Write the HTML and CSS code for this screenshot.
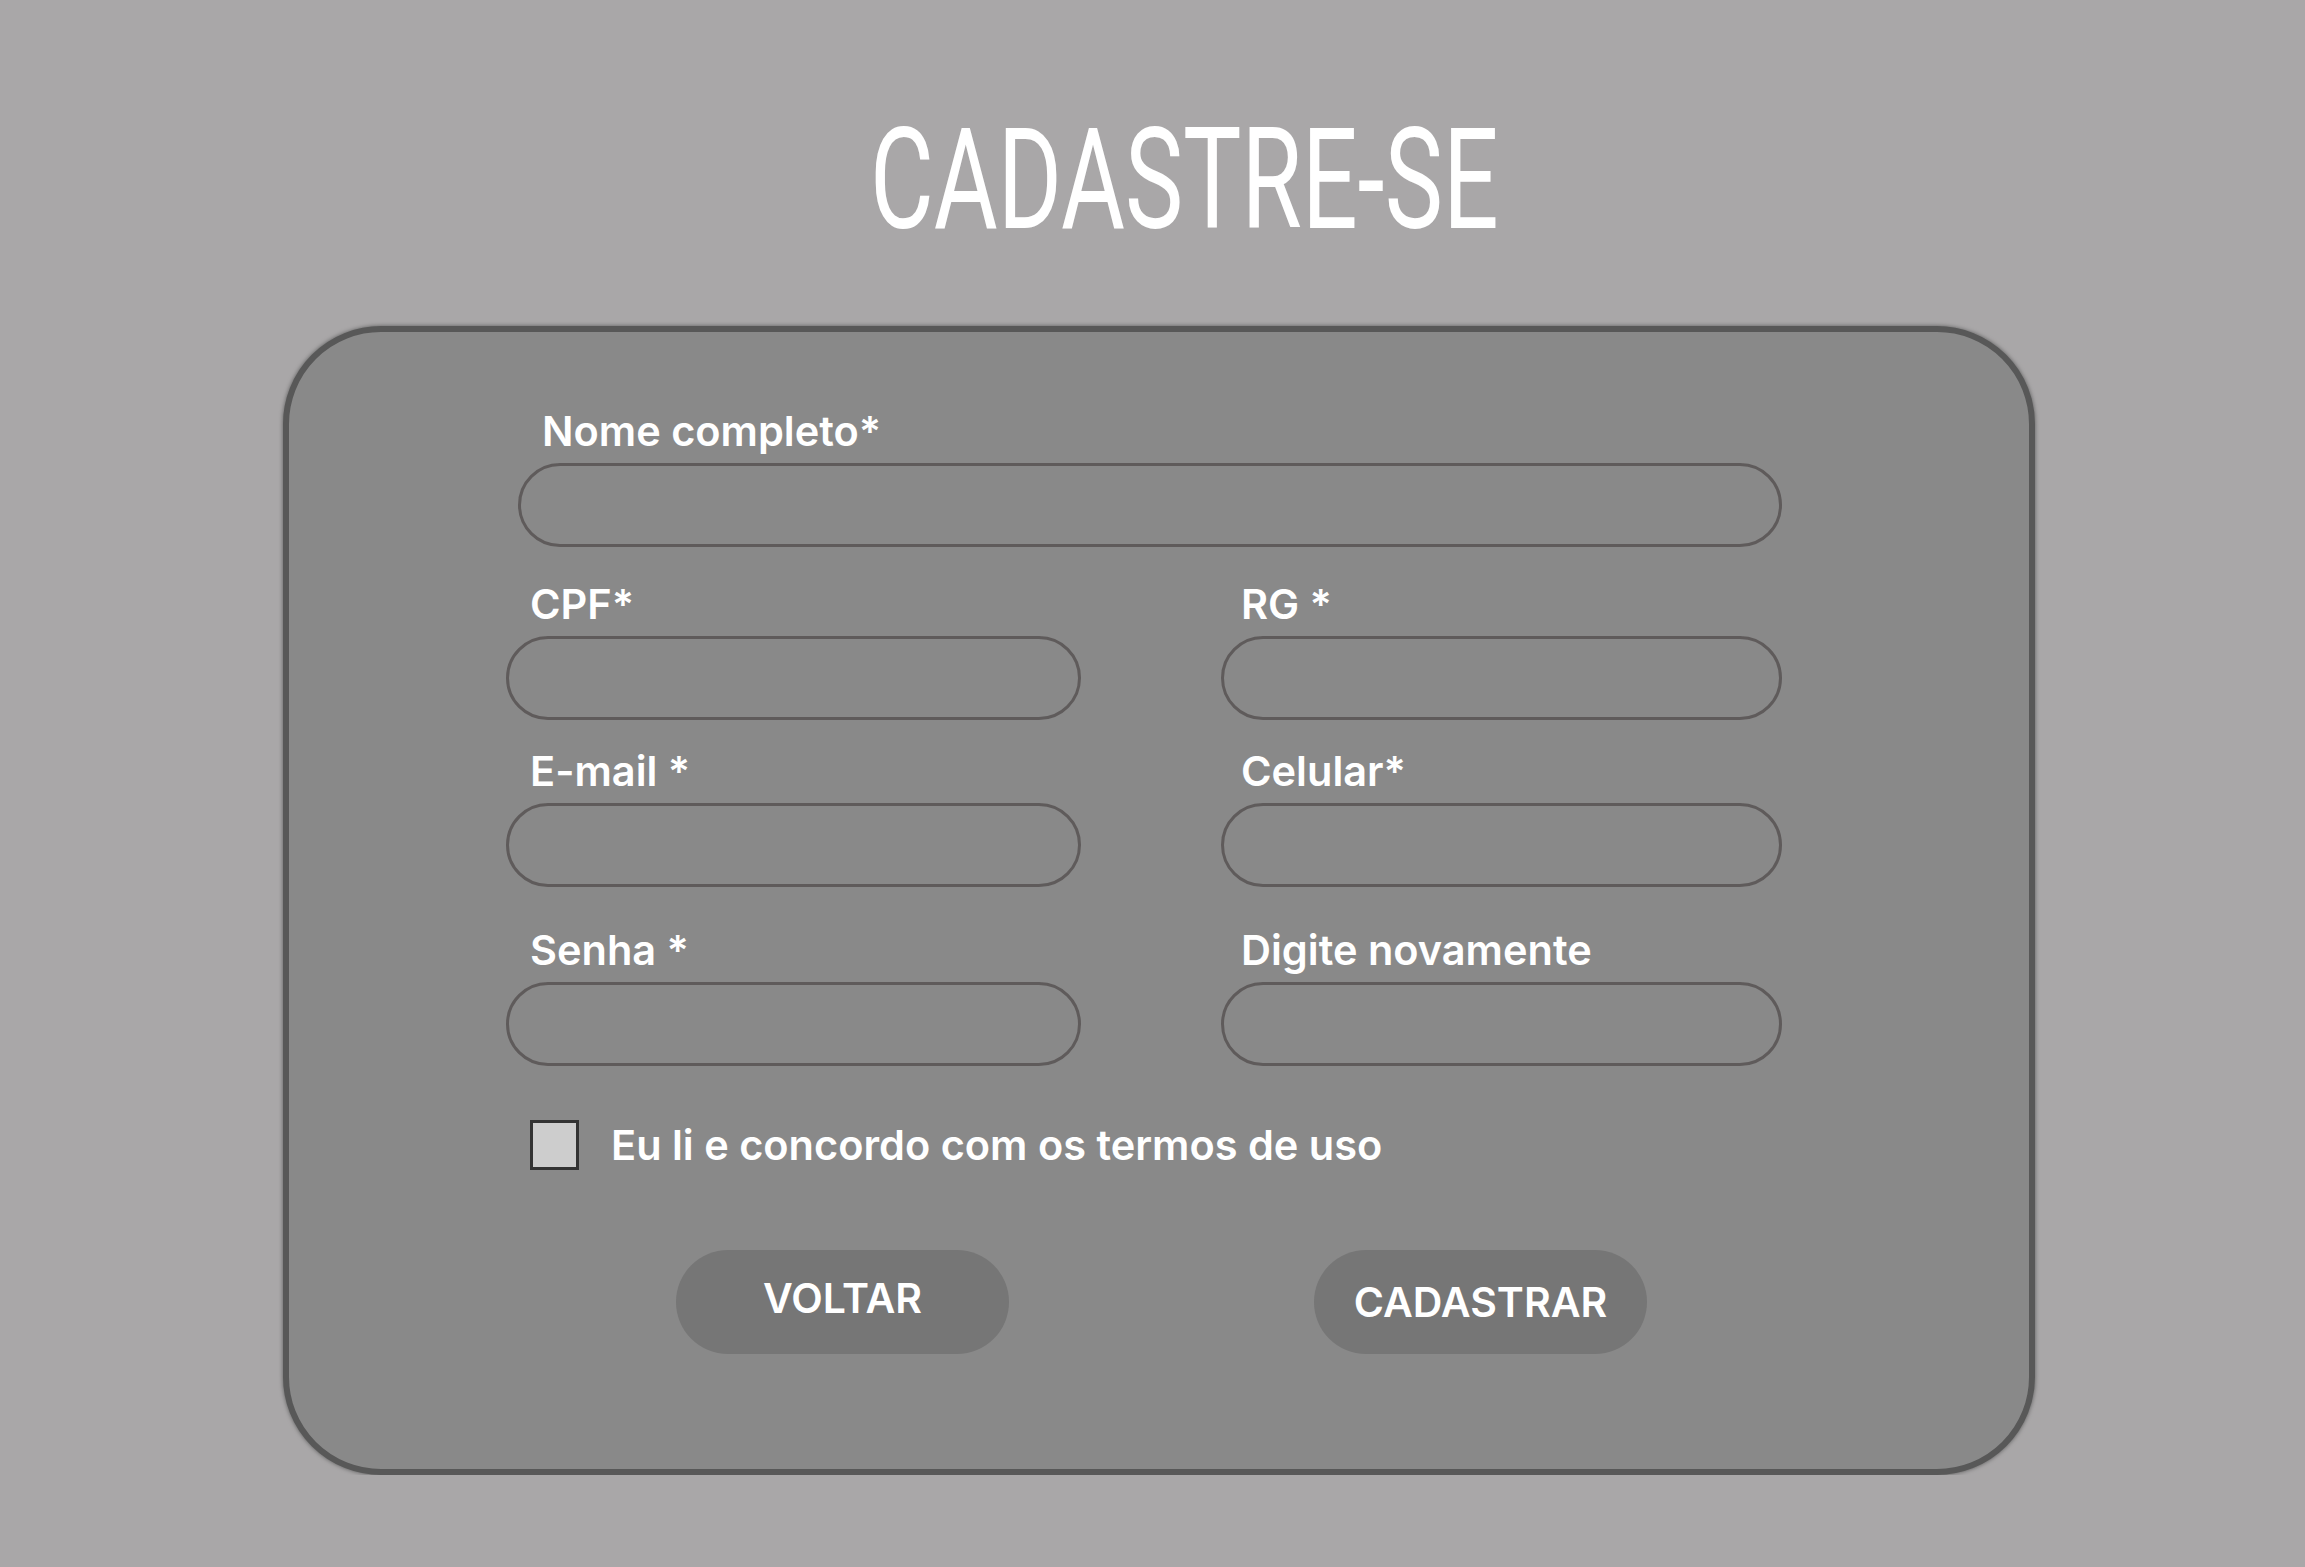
FILE: index.html
```html
<!DOCTYPE html>
<html>
<head>
  <title>Cadastre-se</title>
  <link rel="stylesheet" href="styles.css">
</head>
<body>
  <h1 class="title"><span class="title-text">CADASTRE-SE</span></h1>

  <form class="card" onsubmit="return false">
    <div class="fields">
      <div class="field full">
        <label for="nome">Nome completo*</label>
        <input type="text" id="nome">
      </div>
      <div class="field row-2">
        <label for="cpf">CPF*</label>
        <input type="text" id="cpf">
      </div>
      <div class="field right row-2">
        <label for="rg">RG *</label>
        <input type="text" id="rg">
      </div>
      <div class="field">
        <label for="email">E-mail *</label>
        <input type="email" id="email">
      </div>
      <div class="field right">
        <label for="celular">Celular*</label>
        <input type="tel" id="celular">
      </div>
      <div class="field row-4">
        <label for="senha">Senha *</label>
        <input type="password" id="senha">
      </div>
      <div class="field right row-4">
        <label for="senha2">Digite novamente</label>
        <input type="password" id="senha2">
      </div>
    </div>

    <label class="terms">
      <span class="check"></span>
      Eu li e concordo com os termos de uso
    </label>

    <div class="actions">
      <button type="button" class="btn btn-back">VOLTAR</button>
      <button type="submit" class="btn">CADASTRAR</button>
    </div>
  </form>
</body>
</html>
```

FILE: styles.css
```css
body {
  margin: 0;
  background-color: #a9a7a8;
  font-family: Inter, "Noto Sans", sans-serif;
  color: #fff;
}
.title {
  margin: 109px 0 0;
  padding-left: 63px;
  text-align: center;
  font-family: Roboto, sans-serif;
  font-weight: 400;
  font-size: 141px;
  line-height: 141px;
}
.title-text {
  display: inline-block;
  transform: scaleX(0.695);
}
.card {
  box-sizing: border-box;
  width: 1752px;
  margin: 76px 0 0 283px;
  padding: 75px 0 115px 217px;
  background-color: #898989;
  border: 6px solid #585858;
  border-radius: 98px;
  box-shadow: 0 0 4px #5a5a5a;
}
.fields {
  display: grid;
  grid-template-columns: 575px 561px;
  column-gap: 140px;
  row-gap: 27px;
}
.field {
  display: flex;
  flex-direction: column;
}
.field.full {
  grid-column: 1 / 3;
  margin-left: 12px;
}
.field.row-2 {
  margin-top: 6px;
}
.field.row-4 {
  margin-top: 12px;
}
.field label {
  padding-left: 24px;
  font-size: 41.5px;
  font-weight: 600;
  line-height: 48px;
  margin-bottom: 8px;
}
.field.right label {
  padding-left: 20px;
}
.field input {
  box-sizing: border-box;
  height: 84px;
  background: transparent;
  border: 3px solid #5f5b5b;
  border-radius: 42px;
  outline: none;
}
.terms {
  display: flex;
  align-items: center;
  gap: 32px;
  margin: 54px 0 0 24px;
  font-size: 41.5px;
  font-weight: 600;
}
.check {
  box-sizing: border-box;
  width: 49px;
  height: 50px;
  background-color: #cdcdcd;
  border: 3px solid #333;
}
.actions {
  display: flex;
  gap: 305px;
  margin-top: 80px;
  padding-left: 170px;
}
.btn {
  width: 333px;
  height: 104px;
  border: none;
  border-radius: 52px;
  background-color: #767676;
  color: #fff;
  font-family: Inter, sans-serif;
  font-size: 41px;
  font-weight: 600;
  cursor: pointer;
}
.btn-back {
  padding-bottom: 10px;
}
```
